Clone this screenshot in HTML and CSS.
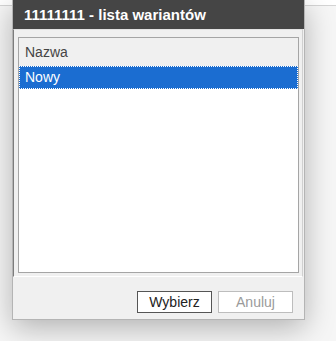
FILE: index.html
```html
<!DOCTYPE html>
<html lang="pl">
<head>
  <meta charset="UTF-8">
  <title>Lista wariantów</title>
  <link rel="stylesheet" href="styles.css">
</head>
<body>

  <div class="dialog">
    <div class="dialog-title">11111111 - lista wariantów</div>

    <div class="dialog-body">
      <div class="listbox">
        <div class="list-head">Nazwa</div>
        <div class="list-row selected">Nowy</div>
      </div>
    </div>

    <div class="dialog-footer">
      <button class="btn">Wybierz</button>
      <button class="btn disabled">Anuluj</button>
    </div>
  </div>

</body>
</html>
```

FILE: styles.css
```css
body {
  margin: 0;
  padding: 0;
  font-family: 'Liberation Sans', Arial, sans-serif;
  background: linear-gradient(to bottom, #ffffff 0, #ffffff 5px, #d4d4d4 5px, #d4d4d4 6px, #f6f6f6 6px);
  height: 341px;
  overflow: hidden;
}

.dialog {
  margin-left: 12px;
  width: 291px;
  border: 1px solid #b4b4b4;
  border-top: none;
  background: #f0f0f0;
  box-shadow: 0 8px 28px rgba(0,0,0,0.28);
}

.dialog-title {
  height: 29px;
  line-height: 29px;
  padding-left: 11px;
  background: #454545;
  color: #ffffff;
  font-size: 15px;
  font-weight: bold;
}

.dialog-body {
  height: 236px;
  padding: 7px 3px 3px 4px;
  border-top: 1px solid #e2e2e2;
  border-left: 1px solid #7c7c7c;
  border-right: 1px solid #d0d0d0;
  border-bottom: 1px solid #ffffff;
  margin-right: 1px;
}

.listbox {
  height: 234px;
  border: 1px solid #a5a5a5;
  background: #ffffff;
  font-size: 14px;
}

.list-head {
  height: 28px;
  line-height: 28px;
  padding-left: 6px;
  background: #f0f0f0;
  color: #444444;
}

.list-row {
  height: 21px;
  line-height: 21px;
  padding-left: 5px;
}

.list-row.selected {
  background: #1b6dd1;
  color: #ffffff;
  border: 1px dotted #ffffff;
}

.dialog-footer {
  display: flex;
  justify-content: flex-end;
  gap: 6px;
  padding: 14px 11px 6px 0;
}

.btn {
  width: 75px;
  height: 22px;
  padding: 0;
  background: #ffffff;
  border: 1px solid #555555;
  border-radius: 0;
  color: #222222;
  font-family: 'Liberation Sans', Arial, sans-serif;
  font-size: 14px;
}

.btn.disabled {
  border-color: #bdbdbd;
  color: #9a9a9a;
}
```
